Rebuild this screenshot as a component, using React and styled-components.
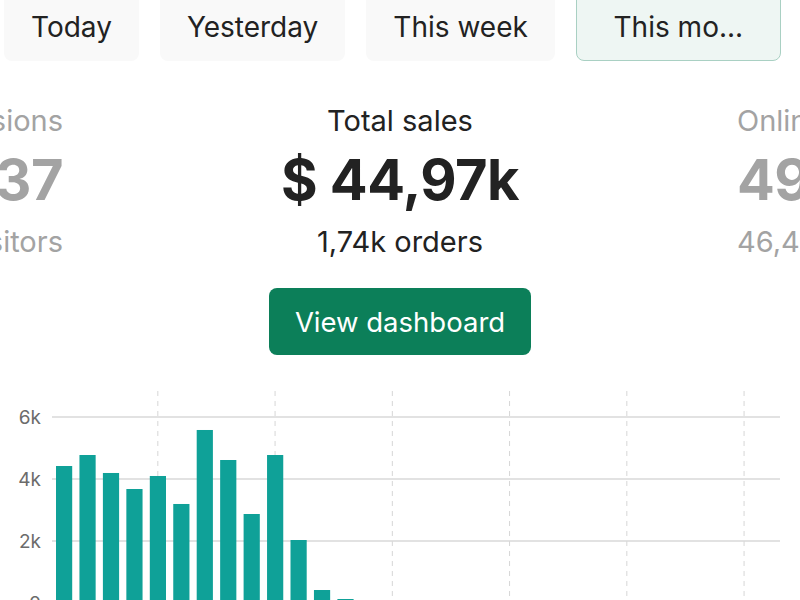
import React from "react";
import styled, { createGlobalStyle } from "styled-components";

const Global = createGlobalStyle`
  html, body { margin: 0; padding: 0; background: #ffffff; overflow: hidden; }
  body { font-family: Inter, "Noto Sans", "Liberation Sans", sans-serif; color: #222; }
`;

const Page = styled.div`
  width: 800px;
  height: 600px;
  overflow: hidden;
  display: flex;
  flex-direction: column;
`;

const Tabs = styled.div`
  display: flex;
  gap: 21px;
  padding-left: 4px;
  margin-top: -14px;
`;

const Tab = styled.div`
  box-sizing: border-box;
  height: 75px;
  padding: 7px 26px 0;
  ${(p) => (p.$width ? `width: ${p.$width}px; padding: 7px 0 0; justify-content: center;` : "")}
  display: flex;
  align-items: center;
  border-radius: 8px;
  font-size: 28px;
  color: #222;
  background: ${(p) => (p.$active ? "#eef6f3" : "#f9f9f9")};
  border: 1.5px solid ${(p) => (p.$active ? "#a9d0c3" : "transparent")};
  white-space: nowrap;
`;

const Stats = styled.div`
  display: grid;
  grid-template-columns: 63px 1fr 63px;
  margin-top: 42px;
`;

const Column = styled.div`
  display: flex;
  flex-direction: column;
  align-items: ${(p) => p.$align};
  white-space: nowrap;
  color: ${(p) => (p.$muted ? "#a3a3a3" : "#222")};
`;

const Label = styled.div`
  font-size: 29px;
  line-height: 36px;
`;

const Value = styled.div`
  font-size: 56px;
  font-weight: 700;
  line-height: 70px;
  margin-top: 6px;
  letter-spacing: -0.5px;
`;

const Sub = styled.div`
  font-size: 29px;
  line-height: 36px;
  margin-top: 9px;
`;

const ButtonRow = styled.div`
  display: flex;
  justify-content: center;
  margin-top: 28px;
`;

const Button = styled.button`
  width: 262px;
  height: 67px;
  border: none;
  border-radius: 8px;
  background: #0c7f59;
  color: #fff;
  font-family: inherit;
  font-size: 27.5px;
  padding: 0;
`;

const Chart = styled.svg`
  display: block;
  margin-top: 26px;
  flex: none;
`;

const data = [4419, 4774, 4194, 3677, 4097, 3194, 5581, 4613, 2871, 4774, 2032, 419, 129];

function BarChart() {
  const x0 = 52.3;
  const pitch = 23.45;
  const zero = 222;
  const perK = 31;
  const grid = [6, 4, 2];
  const dashes = [0, 1, 2, 3, 4, 5].map((k) => x0 + (4.5 + 5 * k) * pitch);
  return (
    <Chart width="800" height="240" viewBox="0 0 800 240">
      {dashes.map((x) => (
        <line key={x} x1={x} x2={x} y1="10" y2="240" stroke="#d6d6d6" strokeWidth="1" strokeDasharray="5 5" />
      ))}
      {grid.map((k) => (
        <g key={k}>
          <line x1="52" x2="780" y1={zero - k * perK} y2={zero - k * perK} stroke="#d8d8d8" strokeWidth="1.5" />
          <text x="41" y={zero - k * perK + 7} textAnchor="end" fontSize="19" fill="#6b6b6b" fontFamily="Inter, sans-serif">
            {k}k
          </text>
        </g>
      ))}
      <text x="41" y={zero + 7} textAnchor="end" fontSize="19" fill="#6b6b6b" fontFamily="Inter, sans-serif">0</text>
      {data.map((v, i) => {
        const h = (v / 1000) * perK;
        return <rect key={i} x={x0 + i * pitch + 3.7} y={zero - h} width="16.2" height={h} fill="#0fa198" />;
      })}
    </Chart>
  );
}

export default function App() {
  return (
    <Page>
      <Global />
      <Tabs>
        <Tab>Today</Tab>
        <Tab>Yesterday</Tab>
        <Tab>This week</Tab>
        <Tab $active $width={205}>This mo...</Tab>
      </Tabs>
      <Stats>
        <Column $align="flex-end" $muted>
          <Label>Sessions</Label>
          <Value>2 837</Value>
          <Sub>1,52k visitors</Sub>
        </Column>
        <Column $align="center">
          <Label>Total sales</Label>
          <Value>$ 44,97k</Value>
          <Sub>1,74k orders</Sub>
        </Column>
        <Column $align="flex-start" $muted>
          <Label>Online store</Label>
          <Value>49,2k</Value>
          <Sub>46,4k visitors</Sub>
        </Column>
      </Stats>
      <ButtonRow>
        <Button>View dashboard</Button>
      </ButtonRow>
      <BarChart />
    </Page>
  );
}
